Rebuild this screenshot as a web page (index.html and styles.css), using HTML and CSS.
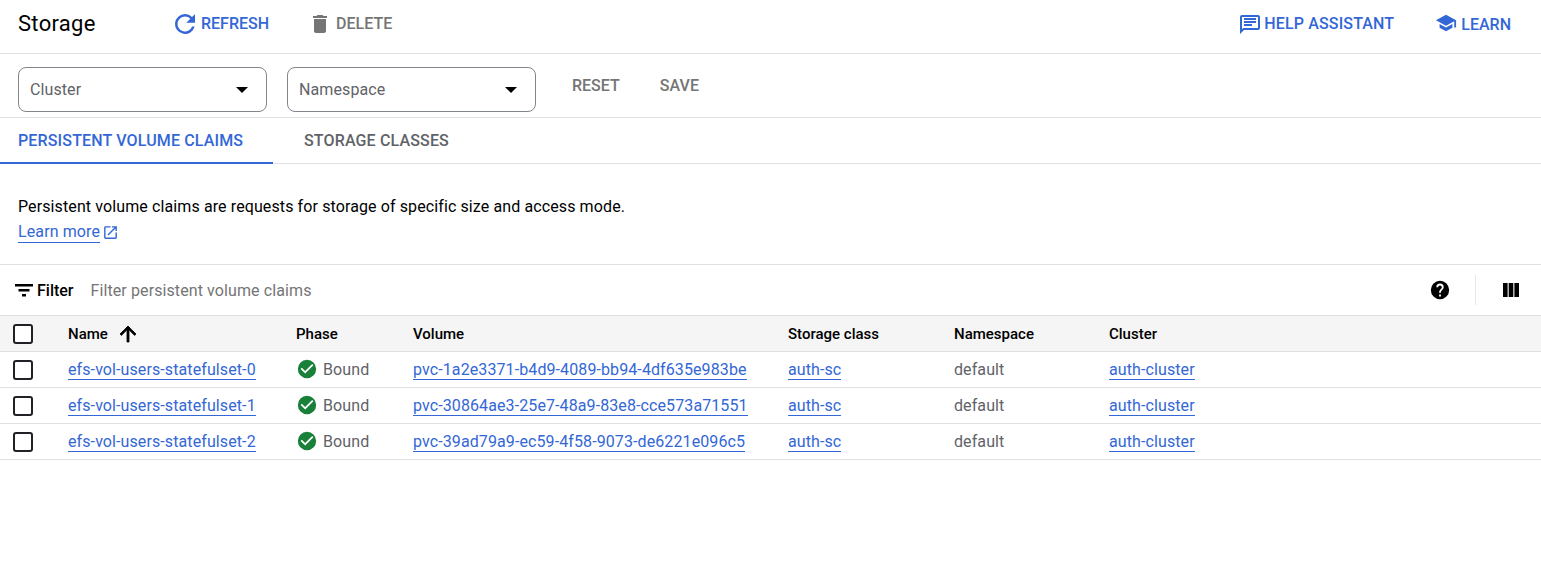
FILE: index.html
```html
<!DOCTYPE html>
<html lang="en">
<head>
    <meta charset="UTF-8">
    <title>Storage</title>
    <link rel="stylesheet" href="styles.css">
</head>
<body>
    <header class="page-header">
        <h1>Storage</h1>
        <div class="actions">
            <a class="action primary refresh">
                <svg width="30" height="30" viewBox="0 0 24 24"><path fill="currentColor" d="M17.65 6.35A7.95 7.95 0 0 0 12 4a8 8 0 1 0 7.73 10h-2.08A6 6 0 1 1 12 6c1.66 0 3.14.69 4.22 1.78L13 11h7V4l-2.35 2.35z"/></svg>
                REFRESH
            </a>
            <a class="action muted delete">
                <svg width="24" height="24" viewBox="0 0 24 24"><path fill="currentColor" d="M6 19c0 1.1.9 2 2 2h8c1.1 0 2-.9 2-2V7H6v12zM19 4h-3.5l-1-1h-5l-1 1H5v2h14V4z"/></svg>
                DELETE
            </a>
        </div>
        <div class="actions right">
            <a class="action primary help">
                <svg width="24" height="24" viewBox="0 0 24 24"><path fill="currentColor" d="M20 3H4a2 2 0 0 0-2 2v17l4-4h14a2 2 0 0 0 2-2V5a2 2 0 0 0-2-2zm0 13H5.2L4 17.2V5h16v11z"/><path fill="currentColor" d="M6 12h8v2H6zM6 9h12v2H6zM6 6h12v2H6z"/></svg>
                HELP ASSISTANT
            </a>
            <a class="action primary learn">
                <svg width="22" height="22" viewBox="0 0 24 24"><path fill="currentColor" d="M5 13.18v4L12 21l7-3.82v-4L12 17l-7-3.82zM12 3 1 9l11 6 9-4.91V17h2V9L12 3z"/></svg>
                LEARN
            </a>
        </div>
    </header>

    <div class="filters">
        <div class="select"><span>Cluster</span><i class="caret"></i></div>
        <div class="select"><span>Namespace</span><i class="caret"></i></div>
        <a class="filter-btn reset">RESET</a>
        <a class="filter-btn save">SAVE</a>
    </div>

    <nav class="tabs">
        <a class="tab active">PERSISTENT VOLUME CLAIMS</a>
        <a class="tab">STORAGE CLASSES</a>
    </nav>

    <section class="intro">
        <p>Persistent volume claims are requests for storage of specific size and access mode.</p>
        <p class="learn-more">
            <a class="link">Learn more</a>
            <svg width="17" height="17" viewBox="0 0 24 24"><path fill="currentColor" d="M19 19H5V5h7V3H5a2 2 0 0 0-2 2v14a2 2 0 0 0 2 2h14a2 2 0 0 0 2-2v-7h-2v7zM14 3v2h3.59l-9.83 9.83 1.41 1.41L19 6.41V10h2V3h-7z"/></svg>
        </p>
    </section>

    <div class="table-filter">
        <svg class="filter-icon" width="24" height="24" viewBox="0 0 24 24"><path fill="currentColor" d="M3 6h18v2.4H3zM6.5 11h11v2.4h-11zM10 16h4v2.4h-4z"/></svg>
        <strong>Filter</strong>
        <span class="placeholder">Filter persistent volume claims</span>
        <svg class="help-icon" width="22" height="22" viewBox="0 0 24 24"><path fill="currentColor" d="M12 2a10 10 0 1 0 0 20 10 10 0 0 0 0-20zm1 17h-2v-2h2v2zm2.07-7.75-.9.92C13.45 12.9 13 13.5 13 15h-2v-.5c0-1.1.45-2.1 1.17-2.83l1.24-1.26c.37-.36.59-.86.59-1.41a2 2 0 1 0-4 0H8a4 4 0 1 1 8 0c0 .88-.36 1.68-.93 2.25z"/></svg>
        <span class="divider"></span>
        <svg class="columns-icon" width="24" height="24" viewBox="0 0 24 24"><path fill="currentColor" d="M4 5h4.6v14H4zM9.7 5h4.6v14H9.7zM15.4 5H20v14h-4.6z"/></svg>
    </div>

    <table class="claims">
        <colgroup>
            <col class="c-check"><col class="c-name"><col class="c-phase"><col class="c-volume"><col class="c-class"><col class="c-ns"><col>
        </colgroup>
        <thead>
            <tr>
                <th><span class="checkbox"></span></th>
                <th>
                    <span class="sorted">Name
                        <svg width="24" height="24" viewBox="0 0 24 24"><path fill="currentColor" d="M4 12l1.41 1.41L11 7.83V20h2V7.83l5.58 5.59L20 12l-8-8-8 8z" stroke="currentColor" stroke-width="0.8"/></svg>
                    </span>
                </th>
                <th>Phase</th>
                <th>Volume</th>
                <th>Storage class</th>
                <th>Namespace</th>
                <th>Cluster</th>
            </tr>
        </thead>
        <tbody>
            <tr>
                <td><span class="checkbox"></span></td>
                <td><a class="link">efs-vol-users-statefulset-0</a></td>
                <td><span class="status"><svg width="22" height="22" viewBox="0 0 24 24"><path fill="#188038" d="M12 2a10 10 0 1 0 0 20 10 10 0 0 0 0-20zm-2 15-5-5 1.41-1.41L10 14.17l7.59-7.59L19 8l-9 9z"/></svg>Bound</span></td>
                <td><a class="link">pvc-1a2e3371-b4d9-4089-bb94-4df635e983be</a></td>
                <td><a class="link">auth-sc</a></td>
                <td>default</td>
                <td><a class="link">auth-cluster</a></td>
            </tr>
            <tr>
                <td><span class="checkbox"></span></td>
                <td><a class="link">efs-vol-users-statefulset-1</a></td>
                <td><span class="status"><svg width="22" height="22" viewBox="0 0 24 24"><path fill="#188038" d="M12 2a10 10 0 1 0 0 20 10 10 0 0 0 0-20zm-2 15-5-5 1.41-1.41L10 14.17l7.59-7.59L19 8l-9 9z"/></svg>Bound</span></td>
                <td><a class="link">pvc-30864ae3-25e7-48a9-83e8-cce573a71551</a></td>
                <td><a class="link">auth-sc</a></td>
                <td>default</td>
                <td><a class="link">auth-cluster</a></td>
            </tr>
            <tr>
                <td><span class="checkbox"></span></td>
                <td><a class="link">efs-vol-users-statefulset-2</a></td>
                <td><span class="status"><svg width="22" height="22" viewBox="0 0 24 24"><path fill="#188038" d="M12 2a10 10 0 1 0 0 20 10 10 0 0 0 0-20zm-2 15-5-5 1.41-1.41L10 14.17l7.59-7.59L19 8l-9 9z"/></svg>Bound</span></td>
                <td><a class="link">pvc-39ad79a9-ec59-4f58-9073-de6221e096c5</a></td>
                <td><a class="link">auth-sc</a></td>
                <td>default</td>
                <td><a class="link">auth-cluster</a></td>
            </tr>
        </tbody>
    </table>
</body>
</html>
```

FILE: styles.css
```css
* {
    box-sizing: border-box;
}
body {
    margin: 0;
    font-family: Roboto, "Liberation Sans", sans-serif;
    font-size: 14px;
    color: #000;
    background: #fff;
}
.page-header {
    display: flex;
    align-items: center;
    height: 54px;
    padding: 0 30px 6px 18px;
    border-bottom: 1px solid #e0e0e0;
}
.page-header h1 {
    margin: 0;
    width: 152px;
    font-size: 22px;
    font-weight: 400;
    letter-spacing: 0.3px;
}
.actions {
    display: flex;
    align-items: center;
}
.actions.right {
    margin-left: auto;
}
.action {
    display: flex;
    align-items: center;
    font-size: 16px;
    font-weight: 500;
}
.action.primary {
    color: #3367d6;
}
.action.muted {
    color: #757575;
}
.refresh {
    gap: 1px;
    margin-right: 39px;
}
.delete {
    gap: 4px;
}
.help {
    gap: 2px;
    margin-right: 41px;
    letter-spacing: 0.15px;
}
.learn {
    gap: 4px;
    padding-top: 2px;
}
.learn svg {
    margin-top: -3px;
}
.filters {
    display: flex;
    align-items: flex-start;
    height: 64px;
    padding: 13px 0 0 18px;
    gap: 20px;
    border-bottom: 1px solid #e0e0e0;
}
.select {
    display: flex;
    align-items: center;
    justify-content: space-between;
    width: 249px;
    height: 45px;
    padding: 0 18px 0 11px;
    border: 1px solid #80868b;
    border-radius: 8px;
    font-size: 16px;
    letter-spacing: 0.1px;
    color: #5f6368;
}
.caret {
    width: 0;
    height: 0;
    border-left: 6px solid transparent;
    border-right: 6px solid transparent;
    border-top: 6px solid #000;
}
.filter-btn {
    margin-top: 9px;
    font-size: 16px;
    font-weight: 500;
    color: #757575;
}
.reset {
    margin-left: 16px;
}
.save {
    margin-left: 20px;
    letter-spacing: 0.1px;
}
.tabs {
    display: flex;
    height: 46px;
    border-bottom: 1px solid #e0e0e0;
}
.tab {
    display: flex;
    align-items: center;
    height: 46px;
    padding: 0 29px 2px 18px;
    font-size: 16px;
    font-weight: 500;
    letter-spacing: 0.15px;
    color: #5f6368;
}
.tab + .tab {
    padding-left: 1px;
}
.tab.active {
    width: 273px;
    margin-right: 30px;
    padding-right: 0;
    padding-bottom: 0;
    color: #3367d6;
    border-bottom: 2px solid #3367d6;
}
.intro {
    height: 101px;
    padding: 33px 18px 0;
    border-bottom: 1px solid #e0e0e0;
    font-size: 16px;
    line-height: 20px;
    letter-spacing: 0.11px;
}
.intro p {
    margin: 0 0 5px;
}
.learn-more {
    display: flex;
    align-items: center;
    gap: 2px;
    color: #3367d6;
}
.link {
    color: #3367d6;
    border-bottom: 1px solid #3367d6;
}
.table-filter {
    display: flex;
    align-items: center;
    height: 51px;
    padding: 0 18px 0 12px;
    border-bottom: 1px solid #e0e0e0;
    font-size: 16px;
}
.table-filter strong {
    margin-left: 1px;
    font-weight: 500;
}
.placeholder {
    margin-left: 17px;
    letter-spacing: 0.1px;
    color: #757575;
}
.help-icon {
    margin-left: auto;
}
.divider {
    width: 1px;
    height: 30px;
    margin: 0 23px 0 24px;
    background: #e8e8e8;
}
.claims {
    width: 100%;
    table-layout: fixed;
    border-collapse: collapse;
    font-size: 16px;
    letter-spacing: 0.1px;
}
.c-check { width: 68px; }
.c-name { width: 228px; }
.c-phase { width: 117px; }
.c-volume { width: 375px; }
.c-class { width: 166px; }
.c-ns { width: 155px; }
.claims th,
.claims td {
    height: 36px;
    padding: 0;
    text-align: left;
    border-bottom: 1px solid #e0e0e0;
    white-space: nowrap;
}
.claims th {
    height: 35px;
    padding-top: 1px;
    background: #f5f5f5;
    font-size: 15px;
    font-weight: 500;
    letter-spacing: 0;
}
.claims td {
    color: #5f6368;
}
.claims td .checkbox {
    margin-top: 1px;
}
.checkbox {
    display: block;
    width: 20px;
    height: 20px;
    margin-left: 13px;
    border: 2px solid #202124;
    border-radius: 3px;
    background: #fff;
}
.sorted {
    display: flex;
    align-items: center;
    gap: 8px;
}
.status {
    display: flex;
    align-items: center;
    gap: 5px;
}
```
